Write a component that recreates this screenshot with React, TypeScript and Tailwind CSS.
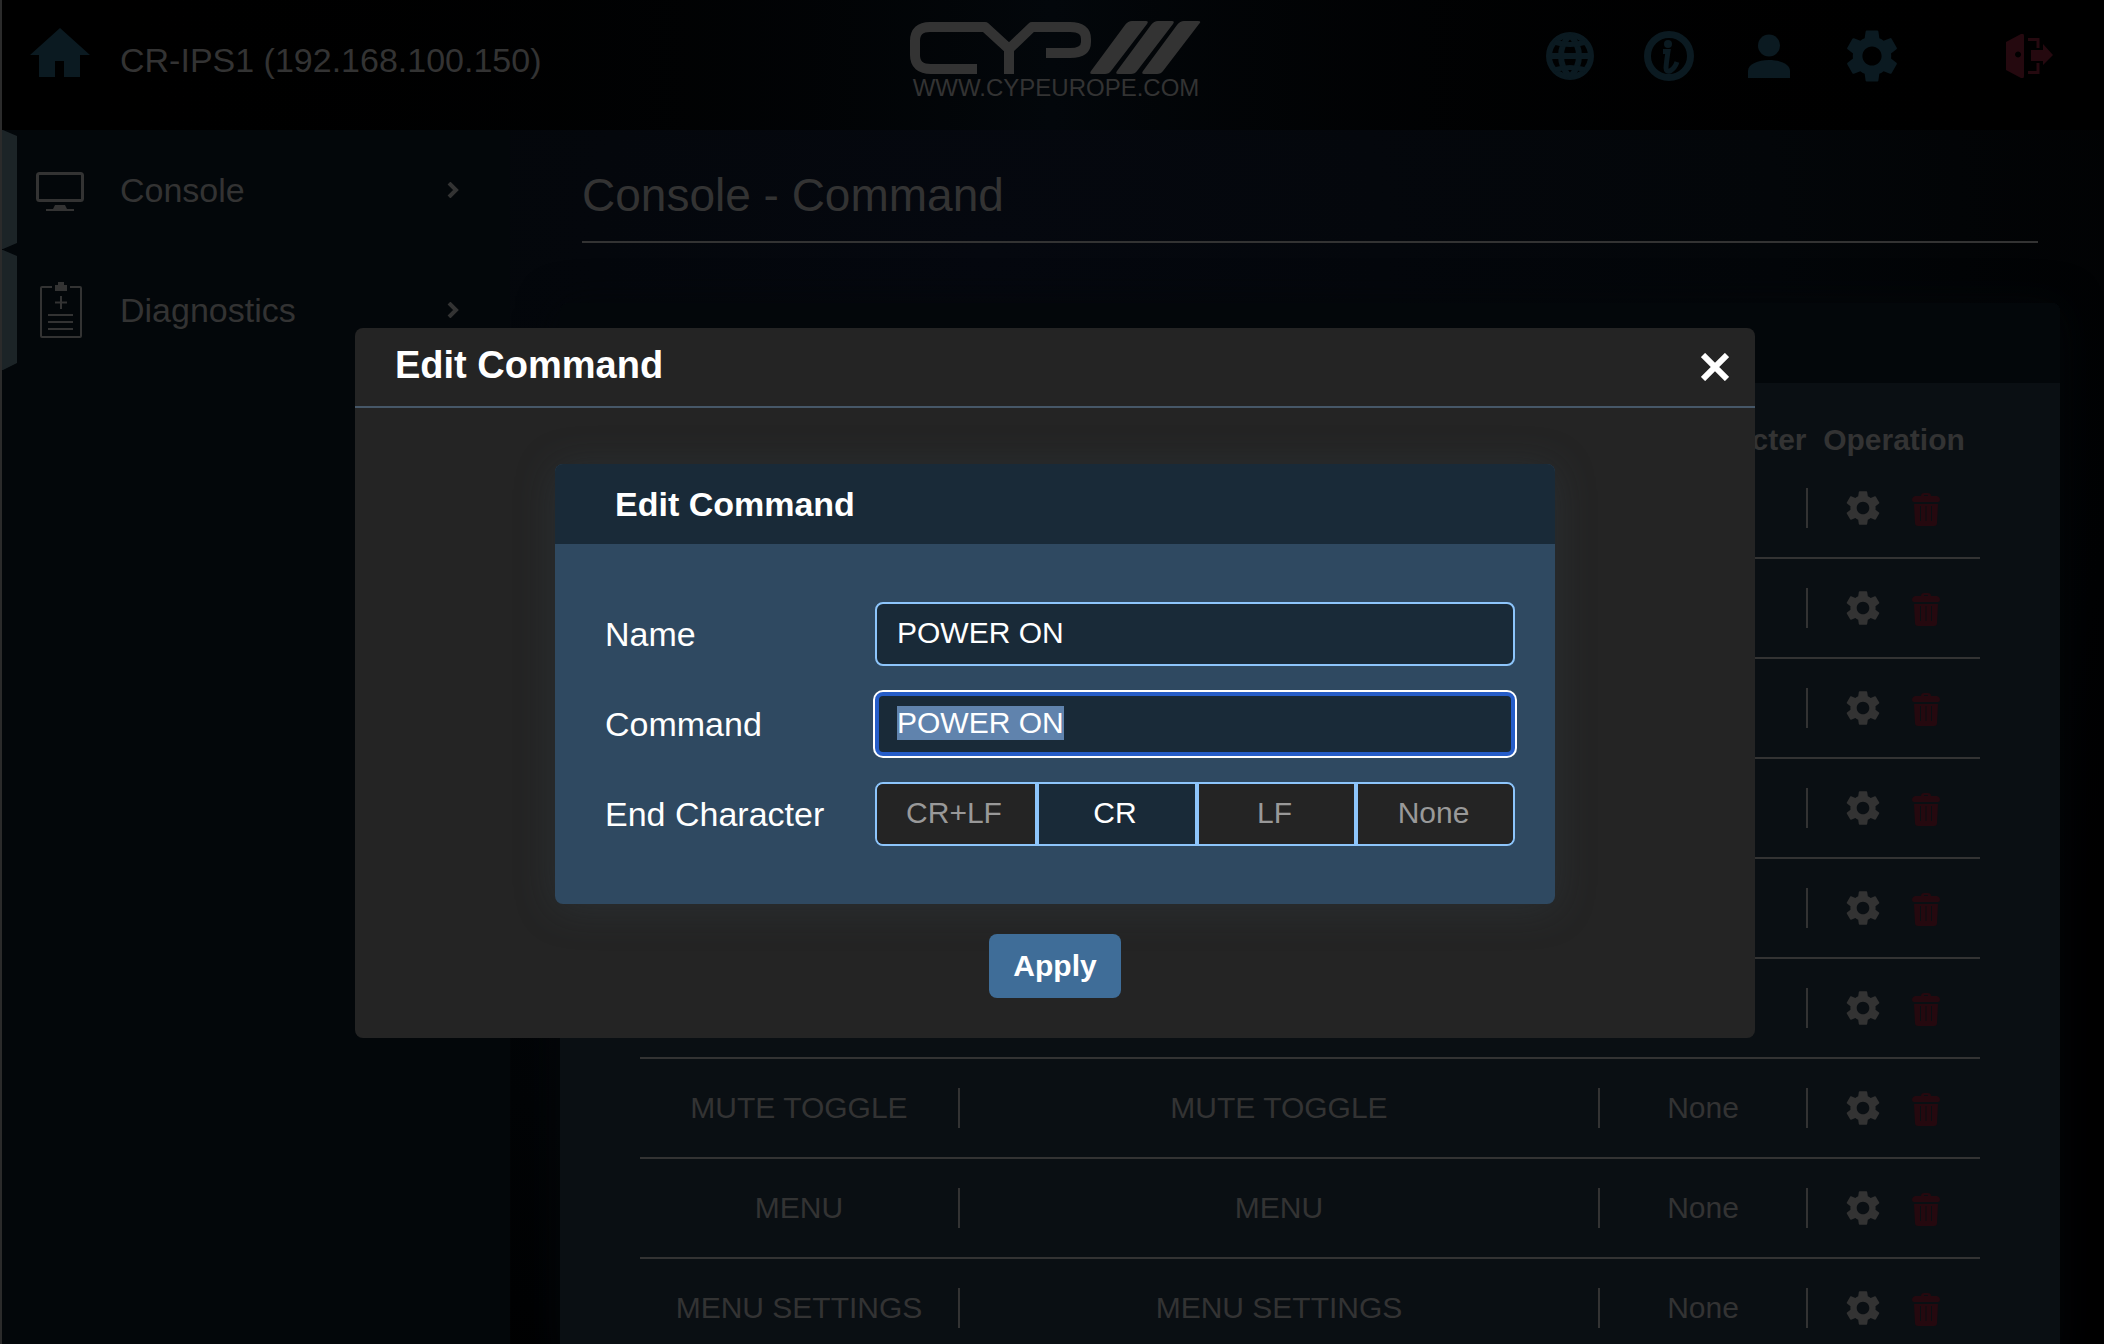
import { FC, ReactNode, useEffect, useRef, useState } from "react";
import { MdSettings } from "react-icons/md";

interface Command {
  name: string;
  command: string;
  end: string;
}

const commands: Command[] = [
  { name: "POWER ON", command: "POWER ON", end: "CR" },
  { name: "POWER OFF", command: "POWER OFF", end: "CR" },
  { name: "VOLUME UP", command: "VOLUME UP", end: "None" },
  { name: "VOLUME DOWN", command: "VOLUME DOWN", end: "None" },
  { name: "MUTE ON", command: "MUTE ON", end: "None" },
  { name: "MUTE OFF", command: "MUTE OFF", end: "None" },
  { name: "MUTE TOGGLE", command: "MUTE TOGGLE", end: "None" },
  { name: "MENU", command: "MENU", end: "None" },
  { name: "MENU SETTINGS", command: "MENU SETTINGS", end: "None" },
];

const endCharacters = ["CR+LF", "CR", "LF", "None"];

const HomeIcon: FC = () => (
  <svg className="h-[50px] w-15" viewBox="0 0 60 50" fill="currentColor">
    <path d="M30 0L60 27H50V49H34V33H25V49H9V27H0Z" />
  </svg>
);

const Logo: FC = () => (
  <svg className="h-14 w-[292px]" viewBox="0 0 292 56" fill="none">
    <g stroke="#333" strokeWidth="10" strokeLinejoin="round">
      <path d="M67 49H21Q5 49 5 35V21Q5 7 20 7H75L99 29L122 7H160Q176 7 176 19V22Q176 33 160 33H136" />
      <path d="M99 28V54" />
    </g>
    <g fill="#333">
      <path d="M222 1H236Q239 1 237 4L201 51Q199 54 195 54H182Q179 54 181 51L215 5Q218 1 222 1Z" />
      <path d="M248 1H262Q265 1 263 4L227 51Q225 54 221 54H208Q205 54 207 51L241 5Q244 1 248 1Z" />
      <path d="M274 1H288Q292 1 289 4L253 51Q251 54 247 54H234Q231 54 233 51L267 5Q270 1 274 1Z" />
    </g>
  </svg>
);

const GlobeIcon: FC = () => (
  <svg className="size-12" viewBox="0 0 48 48" fill="none" stroke="currentColor" strokeWidth="6">
    <circle cx="24" cy="24" r="21" />
    <path d="M24 3Q15 12 15 24T24 45M24 3Q33 12 33 24T24 45" />
    <path d="M3 24H45" />
    <path d="M8 10Q24 15 40 10M8 38Q24 33 40 38" strokeWidth="5" />
  </svg>
);

const InfoIcon: FC = () => (
  <svg className="size-[50px]" viewBox="0 0 50 50" fill="none" stroke="currentColor">
    <circle cx="25" cy="25" r="21.5" strokeWidth="7" />
    <circle cx="24" cy="13" r="4" fill="currentColor" stroke="none" />
    <path d="M19 20.500H24Q22 34 22 37Q22 41 26 40Q31 37 33 31" strokeWidth="5" />
  </svg>
);

const PersonIcon: FC = () => (
  <svg className="h-11 w-[42px]" viewBox="0 0 42 44" fill="currentColor">
    <circle cx="21" cy="11.5" r="11" />
    <path d="M0 44V37C0 30 10 26 21 26S42 30 42 37V44Z" />
  </svg>
);

const LogoutIcon: FC = () => (
  <svg className="h-11 w-12" viewBox="0 0 48 44" fill="currentColor">
    <path
      fillRule="evenodd"
      d="M0 8L15 0Q18 -1 18 2V42Q18 45 15 44L0 36ZM12 17.500a3 3 0 1 0 0.100 0Z"
    />
    <path d="M25 16H37V10L47 21L37 31V27H25Z" />
    <path d="M22 5.500H32V14M32 29V38.500H22" fill="none" stroke="currentColor" strokeWidth="3" />
  </svg>
);

const MonitorIcon: FC = () => (
  <svg className="h-10 w-12" viewBox="0 0 48 40" fill="none">
    <rect x="1.5" y="1.5" width="45" height="27" rx="2" stroke="currentColor" strokeWidth="3" />
    <path d="M19 33H29L31 37H38V39H10V37H17Z" fill="currentColor" />
  </svg>
);

const ClipboardIcon: FC = () => (
  <svg className="h-14 w-12" viewBox="0 0 48 56" fill="none" stroke="currentColor" strokeWidth="2">
    <path d="M16 5H6Q5 5 5 6V54Q5 55 6 55H44Q45 55 45 54V6Q45 5 44 5H34" />
    <path d="M19 3H22V0H28V3H31V9H19Z" fill="currentColor" stroke="none" />
    <path d="M25 14V27M19 20.500H31M12 33H37M12 40H37M12 47H37" />
  </svg>
);

const TrashIcon: FC = () => (
  <svg className="h-9 w-7" viewBox="0 0 28 36" fill="currentColor">
    <path
      fillRule="evenodd"
      d="M9 4Q9 1 12 1H16Q19 1 19 4H25Q28 5 28 8Q28 10 26 10H2Q0 10 0 8Q0 5 3 4ZM12 4H16V3H12Z"
    />
    <path
      fillRule="evenodd"
      d="M2 12H26L25 31Q25 34 22 34H6Q3 34 3 31ZM8 14V29H9V14ZM13.500 14V29H14.500V14ZM19 14V29H20V14Z"
    />
  </svg>
);

const ChevronIcon: FC = () => (
  <svg className="h-4 w-3" viewBox="0 0 12 16" fill="none" stroke="currentColor" strokeWidth="4">
    <path d="M2 1L9 8L2 15" />
  </svg>
);

const Header: FC = () => (
  <header className="grid h-[130px] grid-cols-3 items-start bg-linear-to-r from-black via-[#03070b] to-black px-[30px]">
    <div className="flex pt-7">
      <a href="#home" aria-label="Home" className="text-[#0b1a21]">
        <HomeIcon />
      </a>
      <span className="pl-[30px] pt-3 text-[34px] leading-10">
        CR-IPS1 (192.168.100.150)
      </span>
    </div>
    <div className="flex flex-col items-center pl-2 pt-5">
      <Logo />
      <span className="text-2xl leading-6">WWW.CYPEUROPE.COM</span>
    </div>
    <nav className="flex items-center justify-end pr-5 pt-6 text-[#0b1a21]">
      <a href="#language" aria-label="Language" className="mr-[50px]">
        <GlobeIcon />
      </a>
      <a href="#info" aria-label="Information" className="mr-[54px]">
        <InfoIcon />
      </a>
      <a href="#user" aria-label="User" className="mr-[50px]">
        <PersonIcon />
      </a>
      <a href="#settings" aria-label="Settings" className="mr-[102px]">
        <MdSettings className="size-16" />
      </a>
      <a href="#logout" aria-label="Log out" className="text-[#25090f]">
        <LogoutIcon />
      </a>
    </nav>
  </header>
);

const Sidebar: FC = () => (
  <aside className="w-[510px] shrink-0 bg-[#03070a]">
    <a href="#console" className="flex h-[120px] items-center">
      <svg className="h-[120px] w-[17px]" viewBox="0 0 17 120" fill="#1c2427">
        <path d="M0 0H3L17 6V113L3 119H0Z" />
      </svg>
      <span className="pl-[19px] pt-1">
        <MonitorIcon />
      </span>
      <span className="w-[363px] pl-9 text-[34px] leading-10">Console</span>
      <ChevronIcon />
    </a>
    <a href="#diagnostics" className="flex h-[120px] items-center">
      <svg className="h-[120px] w-[17px]" viewBox="0 0 17 120" fill="#1c2427">
        <path d="M0 0H3L17 6V113L3 120H0Z" />
      </svg>
      <span className="pl-[19px]">
        <ClipboardIcon />
      </span>
      <span className="w-[363px] pl-9 text-[34px] leading-10">Diagnostics</span>
      <ChevronIcon />
    </a>
  </aside>
);

interface CellProps {
  children: ReactNode;
}

const Cell: FC<CellProps> = ({ children }) => (
  <td className="p-0">
    <div className="flex h-10 items-center justify-center border-r-2 border-[#333]">
      {children}
    </div>
  </td>
);

const CommandTable: FC = () => (
  <table className="w-full table-fixed border-collapse text-center text-[30px] leading-10">
    <colgroup>
      <col />
      <col className="w-[640px]" />
      <col className="w-[208px]" />
      <col className="w-[172px]" />
    </colgroup>
    <thead>
      <tr className="h-[75px] whitespace-nowrap align-bottom font-bold">
        <th className="p-0 leading-9">Name</th>
        <th className="p-0 leading-9">Command</th>
        <th className="p-0 leading-9">End Character</th>
        <th className="p-0 leading-9">Operation</th>
      </tr>
    </thead>
    <tbody>
      {commands.map((item) => (
        <tr key={item.name} className="h-[100px] border-b-2 border-[#333]">
          <Cell>{item.name}</Cell>
          <Cell>{item.command}</Cell>
          <Cell>{item.end}</Cell>
          <td className="p-0">
            <div className="flex items-center justify-center gap-7 pr-1.5">
              <button type="button" aria-label={"Edit " + item.name}>
                <MdSettings className="size-[42px]" />
              </button>
              <button type="button" aria-label={"Delete " + item.name} className="pt-1 text-[#25090f]">
                <TrashIcon />
              </button>
            </div>
          </td>
        </tr>
      ))}
    </tbody>
  </table>
);

const EditCommand: FC = () => {
  const [name, setName] = useState("POWER ON");
  const [command, setCommand] = useState("POWER ON");
  const [end, setEnd] = useState("CR");
  const commandRef = useRef<HTMLInputElement>(null);

  useEffect(() => {
    commandRef.current?.focus();
    commandRef.current?.select();
  }, []);

  return (
    <div
      role="dialog"
      aria-label="Edit Command"
      className="w-[1400px] max-w-full rounded-lg bg-[#242424] text-white"
    >
      <div className="flex h-20 items-center justify-between border-b-2 border-[#465768] pl-10 pr-[26px]">
        <h2 className="pb-1 text-[38px] font-bold leading-10">Edit Command</h2>
        <button type="button" aria-label="Close">
          <svg className="size-7" viewBox="0 0 28 28" stroke="currentColor" strokeWidth="6">
            <path d="M2 2L26 26M26 2L2 26" />
          </svg>
        </button>
      </div>

      <form className="flex flex-col items-center px-50 pb-10 pt-14">
        <div className="w-full rounded-lg bg-[#2f4961] shadow-[0_4px_40px_rgba(60,75,85,0.3)]">
          <h3 className="flex h-20 items-center rounded-t-lg bg-[#192a38] pl-15 text-[34px] font-bold leading-10">
            Edit Command
          </h3>
          <div className="grid grid-cols-[270px_1fr] items-center gap-y-[26px] py-[58px] pl-[50px] pr-10 text-[34px] leading-10">
            <label htmlFor="name">Name</label>
            <input
              id="name"
              type="text"
              value={name}
              onChange={(e) => setName(e.target.value)}
              className="h-16 w-full rounded-lg border-2 border-[#8dc5fb] bg-[#192a38] px-5 pb-0.5 text-[30px] outline-none"
            />

            <label htmlFor="command">Command</label>
            <input
              id="command"
              type="text"
              ref={commandRef}
              value={command}
              onChange={(e) => setCommand(e.target.value)}
              className="h-16 w-full rounded-lg border-4 border-[#265dc8] bg-[#192a38] px-[18px] pb-0.5 text-[30px] shadow-[0_0_0_2px_#fff] outline-none selection:bg-[#6083ad] selection:text-white"
            />

            <span id="end-label">End Character</span>
            <div
              role="radiogroup"
              aria-labelledby="end-label"
              className="grid h-16 grid-cols-[162px_160px_159px_1fr] overflow-hidden rounded-lg border-2 border-[#8dc5fb] text-[30px]"
            >
              {endCharacters.map((item) => (
                <label
                  key={item}
                  className="flex items-center justify-center border-r-4 border-[#8dc5fb] bg-[#242424] pb-0.5 pr-1 text-[#999] last:border-r-0 has-checked:bg-[#192a38] has-checked:text-white"
                >
                  <input
                    type="radio"
                    name="end"
                    value={item}
                    checked={end === item}
                    onChange={() => setEnd(item)}
                    className="sr-only"
                  />
                  {item}
                </label>
              ))}
            </div>
          </div>
        </div>

        <button
          type="button"
          className="mt-[30px] h-16 w-33 rounded-lg bg-[#3f6d98] pb-0.5 text-[30px] font-bold"
        >
          Apply
        </button>
      </form>
    </div>
  );
};

const App: FC = () => {
  return (
    <div className="relative h-screen overflow-hidden bg-black font-['Liberation_Sans',Arial,sans-serif] text-[#333]">
      <Header />
      <div className="flex">
        <Sidebar />
        <main className="min-w-0 flex-1 bg-[radial-gradient(ellipse_at_30%_10%,#05080f,#030609_50%,#000_85%)] pl-[50px] pr-11">
          <div className="mx-[22px] flex h-[113px] items-center border-b-2 border-[#333]">
            <h1 className="pt-[18px] text-[46px] leading-[52px]">Console - Command</h1>
          </div>
          <section className="mt-15 rounded-t-lg bg-[#0a0f13] shadow-[0_4px_40px_#04070a]">
            <div className="h-20 rounded-t-lg bg-[#03070a]" />
            <div className="px-20">
              <CommandTable />
            </div>
          </section>
        </main>
      </div>
      {/* window edge */}
      <div className="absolute inset-y-0 left-0 w-0.5 bg-[#2b2b2b]" />
      <div className="absolute inset-0 flex items-start justify-center pl-1.5 pt-[328px]">
        <EditCommand />
      </div>
    </div>
  );
};

export default App;
